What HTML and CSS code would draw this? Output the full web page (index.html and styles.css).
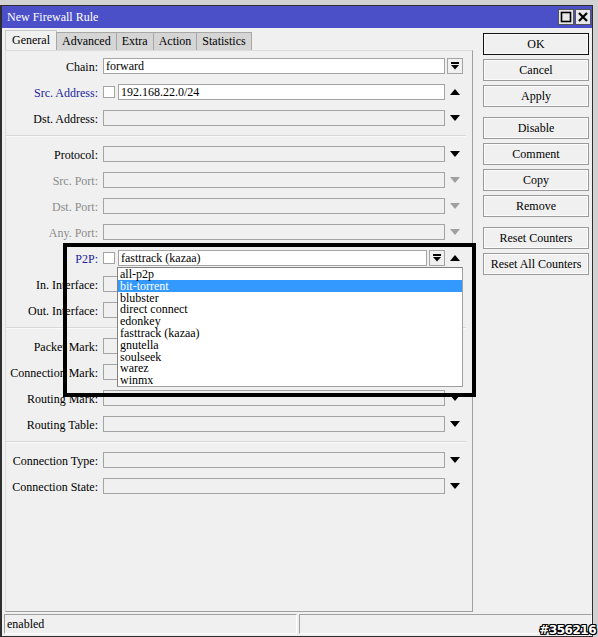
FILE: index.html
```html
<!DOCTYPE html>
<html>
<head>
<meta charset="utf-8">
<link rel="stylesheet" href="styles.css">
</head>
<body>
<div class="window">
  <div class="titlebar">
    <span class="title">New Firewall Rule</span>
    <div class="tbtns">
      <span class="tbtn"><svg width="14" height="14" viewBox="0 0 14 14"><rect x="2.5" y="2.5" width="9" height="9" fill="none" stroke="#000" stroke-width="1.6"/></svg></span>
      <span class="tbtn"><svg width="14" height="14" viewBox="0 0 14 14"><path d="M3 3 L11 11 M11 3 L3 11" stroke="#000" stroke-width="2.2"/></svg></span>
    </div>
  </div>
  <div class="main">
    <div class="leftcol">
      <div class="tabs">
        <span class="tab active">General</span>
        <span class="tab">Advanced</span>
        <span class="tab">Extra</span>
        <span class="tab">Action</span>
        <span class="tab">Statistics</span>
      </div>
      <div class="panel">
        <div class="row">
          <span class="lbl">Chain:</span>
          <div class="field"><div class="input on">forward</div></div>
          <div class="arr start"><span class="box"><svg width="14" height="14" viewBox="0 0 14 14"><rect x="3" y="3" width="8" height="2" fill="#000"/><polygon points="3,6 11,6 7,10.5" fill="#000"/></svg></span></div>
        </div>
        <div class="row">
          <span class="lbl blue">Src. Address:</span>
          <div class="field"><span class="chk"></span><div class="input on">192.168.22.0/24</div></div>
          <div class="arr"><svg width="10" height="6" viewBox="0 0 10 6"><polygon points="0,6 10,6 5,0" fill="#000"/></svg></div>
        </div>
        <div class="row">
          <span class="lbl">Dst. Address:</span>
          <div class="field"><div class="input"></div></div>
          <div class="arr"><svg width="10" height="6" viewBox="0 0 10 6"><polygon points="0,0 10,0 5,6" fill="#000"/></svg></div>
        </div>
        <div class="sep"><span></span></div>
        <div class="row">
          <span class="lbl">Protocol:</span>
          <div class="field"><div class="input"></div></div>
          <div class="arr"><svg width="10" height="6" viewBox="0 0 10 6"><polygon points="0,0 10,0 5,6" fill="#000"/></svg></div>
        </div>
        <div class="row">
          <span class="lbl grey">Src. Port:</span>
          <div class="field"><div class="input"></div></div>
          <div class="arr"><svg width="10" height="6" viewBox="0 0 10 6"><polygon points="0,0 10,0 5,6" fill="#a0a0a0"/></svg></div>
        </div>
        <div class="row">
          <span class="lbl grey">Dst. Port:</span>
          <div class="field"><div class="input"></div></div>
          <div class="arr"><svg width="10" height="6" viewBox="0 0 10 6"><polygon points="0,0 10,0 5,6" fill="#a0a0a0"/></svg></div>
        </div>
        <div class="row">
          <span class="lbl grey">Any. Port:</span>
          <div class="field"><div class="input"></div></div>
          <div class="arr"><svg width="10" height="6" viewBox="0 0 10 6"><polygon points="0,0 10,0 5,6" fill="#a0a0a0"/></svg></div>
        </div>
        <div class="row">
          <span class="lbl blue">P2P:</span>
          <div class="field p2p">
            <span class="chk"></span>
            <div class="input on">fasttrack (kazaa)</div>
            <span class="box"><svg width="14" height="14" viewBox="0 0 14 14"><rect x="3" y="3" width="8" height="2" fill="#000"/><polygon points="3,6 11,6 7,10.5" fill="#000"/></svg></span>
            <ul class="dropdown">
              <li>all-p2p</li>
              <li class="sel">bit-torrent</li>
              <li>blubster</li>
              <li>direct connect</li>
              <li>edonkey</li>
              <li>fasttrack (kazaa)</li>
              <li>gnutella</li>
              <li>soulseek</li>
              <li>warez</li>
              <li>winmx</li>
            </ul>
          </div>
          <div class="arr"><svg width="10" height="6" viewBox="0 0 10 6"><polygon points="0,6 10,6 5,0" fill="#000"/></svg></div>
        </div>
        <div class="row">
          <span class="lbl">In. Interface:</span>
          <div class="field"><div class="input"></div></div>
          <div class="arr"><svg width="10" height="6" viewBox="0 0 10 6"><polygon points="0,0 10,0 5,6" fill="#000"/></svg></div>
        </div>
        <div class="row">
          <span class="lbl">Out. Interface:</span>
          <div class="field"><div class="input"></div></div>
          <div class="arr"><svg width="10" height="6" viewBox="0 0 10 6"><polygon points="0,0 10,0 5,6" fill="#000"/></svg></div>
        </div>
        <div class="sep"><span></span></div>
        <div class="row">
          <span class="lbl">Packet Mark:</span>
          <div class="field"><div class="input"></div></div>
          <div class="arr"><svg width="10" height="6" viewBox="0 0 10 6"><polygon points="0,0 10,0 5,6" fill="#000"/></svg></div>
        </div>
        <div class="row">
          <span class="lbl">Connection Mark:</span>
          <div class="field"><div class="input"></div></div>
          <div class="arr"><svg width="10" height="6" viewBox="0 0 10 6"><polygon points="0,0 10,0 5,6" fill="#000"/></svg></div>
        </div>
        <div class="row">
          <span class="lbl">Routing Mark:</span>
          <div class="field"><div class="input"></div></div>
          <div class="arr"><svg width="10" height="6" viewBox="0 0 10 6"><polygon points="0,0 10,0 5,6" fill="#000"/></svg></div>
        </div>
        <div class="row">
          <span class="lbl">Routing Table:</span>
          <div class="field"><div class="input"></div></div>
          <div class="arr"><svg width="10" height="6" viewBox="0 0 10 6"><polygon points="0,0 10,0 5,6" fill="#000"/></svg></div>
        </div>
        <div class="sep"><span></span></div>
        <div class="row">
          <span class="lbl">Connection Type:</span>
          <div class="field"><div class="input"></div></div>
          <div class="arr"><svg width="10" height="6" viewBox="0 0 10 6"><polygon points="0,0 10,0 5,6" fill="#000"/></svg></div>
        </div>
        <div class="row">
          <span class="lbl">Connection State:</span>
          <div class="field"><div class="input"></div></div>
          <div class="arr"><svg width="10" height="6" viewBox="0 0 10 6"><polygon points="0,0 10,0 5,6" fill="#000"/></svg></div>
        </div>
      </div>
    </div>
    <div class="buttons">
      <div class="bgroup">
        <span class="btn ok">OK</span>
        <span class="btn">Cancel</span>
        <span class="btn">Apply</span>
      </div>
      <div class="bgroup">
        <span class="btn">Disable</span>
        <span class="btn">Comment</span>
        <span class="btn">Copy</span>
        <span class="btn">Remove</span>
      </div>
      <div class="bgroup">
        <span class="btn">Reset Counters</span>
        <span class="btn">Reset All Counters</span>
      </div>
    </div>
  </div>
  <div class="status">
    <span class="pane">enabled</span>
    <span class="pane"></span>
  </div>
</div>
<div class="highlight"></div>
<div class="watermark">#356216</div>
</body>
</html>
```
FILE: styles.css
```css
html, body {
  margin: 0;
  padding: 0;
}
body {
  width: 598px;
  height: 637px;
  overflow: hidden;
  background: #d2d2d2;
  font-family: "Liberation Serif", "Times New Roman", serif;
  font-size: 12px;
  color: #000;
  position: relative;
}
.window {
  margin-top: 5px;
  width: 593px;
  height: 632px;
  box-sizing: border-box;
  border: 1px solid #2e2e2e;
  border-left-width: 2px;
  background: #f0f0f0;
  display: flex;
  flex-direction: column;
}
.titlebar {
  height: 22px;
  background: #4b50c8;
  display: flex;
  align-items: center;
  justify-content: space-between;
  padding: 0 1px 0 5px;
}
.title {
  color: #fff;
  font-size: 12px;
}
.tbtns {
  display: flex;
  gap: 1px;
}
.tbtn {
  width: 14px;
  height: 14px;
  background: #e8e8e8;
  border: 1px solid #555;
  display: flex;
}
.main {
  display: flex;
  height: 584px;
}
.leftcol {
  margin-left: 3px;
  display: flex;
  flex-direction: column;
}
.tabs {
  margin-top: 2px;
  height: 20px;
  display: flex;
  align-items: flex-end;
}
.tab {
  height: 18px;
  box-sizing: border-box;
  padding: 0 5px;
  line-height: 17px;
  background: #d5d5d5;
  border: 1px solid #a8a8a8;
  border-bottom: none;
  margin-right: -1px;
}
.tab.active {
  height: 20px;
  background: #f0f0f0;
  line-height: 18px;
  padding: 0 6px;
  border-color: #c8c8c8;
}
.panel {
  width: 468px;
  height: 562px;
  box-sizing: border-box;
  border: 1px solid #a0a0a0;
  border-top-color: #dcdcdc;
  border-left-color: #dcdcdc;
  padding-top: 2px;
}
.row {
  height: 26px;
  display: flex;
  align-items: center;
}
.lbl {
  width: 92px;
  margin-right: 5px;
  text-align: right;
  white-space: nowrap;
  position: relative;
  top: 1px;
}
.lbl.blue { color: #1d1d9e; }
.lbl.grey { color: #8c8c8c; }
.field {
  width: 342px;
  height: 16px;
  display: flex;
  align-items: center;
  gap: 3px;
}
.field.p2p {
  position: relative;
}
.field.p2p .box {
  margin-left: -1px;
}
.input {
  flex: 1;
  height: 16px;
  box-sizing: border-box;
  border: 1px solid #a4a4a4;
  background: #f0f0f0;
  padding-left: 2px;
  line-height: 15px;
  white-space: nowrap;
}
.input.on {
  background: #fff;
}
.chk {
  width: 12px;
  height: 12px;
  box-sizing: border-box;
  border: 1px solid #a4a4a4;
  background: #fff;
  flex: none;
}
.box {
  width: 16px;
  height: 16px;
  box-sizing: border-box;
  border: 1px solid #a4a4a4;
  background: #f0f0f0;
  display: flex;
  align-items: center;
  justify-content: center;
  flex: none;
}
.arr {
  width: 20px;
  height: 16px;
  display: flex;
  align-items: center;
  justify-content: center;
}
.arr.start {
  justify-content: flex-start;
  padding-left: 2px;
  box-sizing: border-box;
}
.sep {
  height: 10px;
  display: flex;
  align-items: center;
}
.sep span {
  width: 460px;
  height: 1px;
  background: #d8d8d8;
  border-bottom: 1px solid #fafafa;
}
.dropdown {
  position: absolute;
  left: 14px;
  top: 17px;
  width: 346px;
  height: 120px;
  box-sizing: border-box;
  margin: 0;
  padding: 0;
  list-style: none;
  background: #fff;
  border: 1px solid #808080;
  border-right-color: #a0a0a0;
  border-bottom-color: #a0a0a0;
  z-index: 2;
}
.dropdown li {
  height: 11.8px;
  line-height: 12px;
  padding-left: 2px;
  white-space: nowrap;
}
.dropdown li.sel {
  background: #3399ff;
  color: #fff;
}
.buttons {
  margin-left: 10px;
  margin-top: 5px;
  display: flex;
  flex-direction: column;
  gap: 10px;
}
.bgroup {
  display: flex;
  flex-direction: column;
  gap: 4px;
}
.btn {
  width: 106px;
  height: 22px;
  box-sizing: border-box;
  border: 1px solid #9a9a9a;
  box-shadow: inset 0 0 0 1px #fbfbfb;
  background: #f0f0f0;
  text-align: center;
  line-height: 21px;
  white-space: nowrap;
}
.btn.ok {
  border-color: #111;
}
.status {
  margin-top: 2px;
  height: 20px;
  display: flex;
  gap: 2px;
  padding: 0 0 0 2px;
}
.pane {
  height: 20px;
  box-sizing: border-box;
  border: 1px solid #a0a0a0;
  border-right-color: #fff;
  border-bottom-color: #fff;
  padding-left: 2px;
  line-height: 18px;
  flex: 1;
}
.highlight {
  position: absolute;
  left: 63px;
  top: 243px;
  width: 413px;
  height: 154px;
  box-sizing: border-box;
  border: 4px solid #000;
  pointer-events: none;
  z-index: 3;
}
.watermark {
  position: absolute;
  right: 2px;
  bottom: 0px;
  font-family: "DejaVu Sans", sans-serif;
  font-weight: bold;
  font-size: 12px;
  line-height: 14px;
  color: #fff;
  text-shadow: 1px 0 0 #000, -1px 0 0 #000, 0 1px 0 #000, 0 -1px 0 #000, 1px 1px 0 #000, -1px -1px 0 #000, 1px -1px 0 #000, -1px 1px 0 #000;
  letter-spacing: -0.5px;
  z-index: 4;
}
```
